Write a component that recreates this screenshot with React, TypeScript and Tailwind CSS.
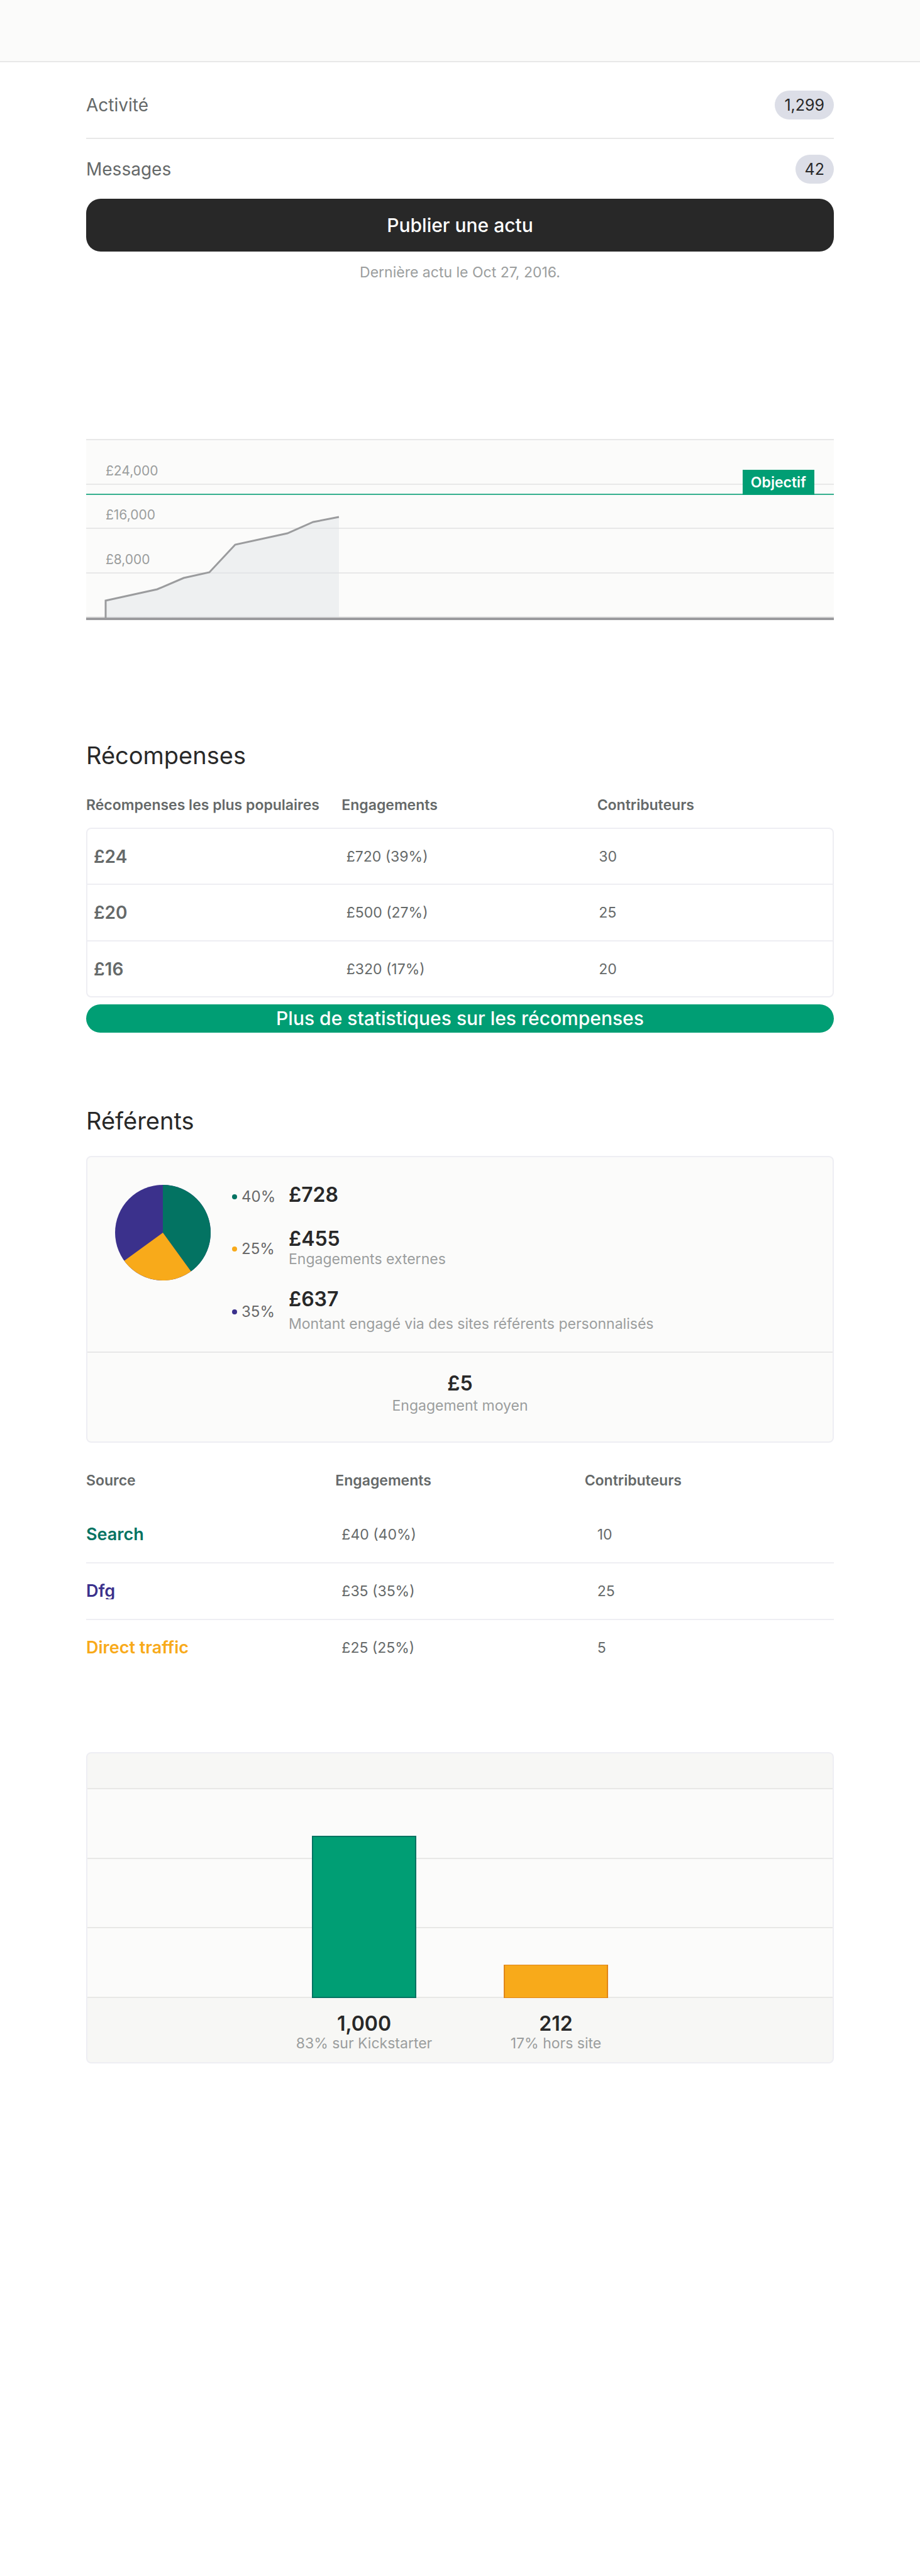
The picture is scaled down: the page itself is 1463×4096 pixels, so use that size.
import React from 'react';

const stats = [
  { label: 'Activité', value: '1,299', row: 'pt-[45px] pb-[29px] border-b-2 border-[#e8e8e8]' },
  { label: 'Messages', value: '42', row: 'pt-[25px] pb-[24px]' },
];

const axisLabels = ['£24,000', '£16,000', '£8,000', ''];

const rewards = [
  { amount: '£24', pledged: '£720 (39%)', backers: '30' },
  { amount: '£20', pledged: '£500 (27%)', backers: '25' },
  { amount: '£16', pledged: '£320 (17%)', backers: '20' },
];

const shares = [
  { percent: '40%', amount: '£728', caption: '', dot: 'bg-[#037362]', captionGap: '' },
  { percent: '25%', amount: '£455', caption: 'Engagements externes', dot: 'bg-[#f8aa1a]', captionGap: '' },
  {
    percent: '35%',
    amount: '£637',
    caption: 'Montant engagé via des sites référents personnalisés',
    dot: 'bg-[#3b318c]',
    captionGap: 'mt-[7px]',
  },
];

const sources = [
  { name: 'Search', style: 'text-[#037362]', pledged: '£40 (40%)', backers: '10' },
  { name: 'Dfg', style: 'overflow-hidden text-[#3b318c]', pledged: '£35 (35%)', backers: '25' },
  { name: 'Direct traffic', style: 'text-[#f8aa1a]', pledged: '£25 (25%)', backers: '5' },
];

const bars = [
  {
    count: '1,000',
    caption: '83% sur Kickstarter',
    bar: 'h-[258px] bg-[#009e74] border-2 border-[#037362]',
  },
  {
    count: '212',
    caption: '17% hors site',
    bar: 'h-[53px] bg-[#f8aa1a] border-x-2 border-y border-[#e0861a]',
  },
];

function Stats() {
  return (
    <section>
      {stats.map((s) => (
        <div key={s.label} className={`flex items-center justify-between ${s.row}`}>
          <span className="text-[28px] leading-[46px] text-[#656969]">{s.label}</span>
          <span className="rounded-full bg-[#dcdee7] px-[15px] text-[25px] leading-[46px] text-[#282828]">
            {s.value}
          </span>
        </div>
      ))}
      <button
        type="button"
        className="flex h-[84px] w-full items-center justify-center rounded-[23px] bg-[#282828] text-[30px] font-medium text-white"
      >
        Publier une actu
      </button>
      <p className="mt-[18px] text-center text-[23px] leading-[30px] text-[#9b9e9e]">
        Dernière actu le Oct 27, 2016.
      </p>
    </section>
  );
}

function FundingChart() {
  return (
    <section className="relative mt-[250px] bg-[#fbfbfa]">
      <div className="grid h-[282px] grid-rows-4">
        {axisLabels.map((label) => (
          <div
            key={label}
            className="flex items-end border-t-2 border-[#e8e8e8] pb-[8px] pl-[31px] text-[21px] leading-[24px] text-[#9b9e9e]"
          >
            {label}
          </div>
        ))}
      </div>
      <div className="h-[2px] bg-[#e8e8e8]" />
      <div className="h-[4px] bg-[#9b9b9e]" />
      <svg className="absolute inset-0 h-[284px] w-full" aria-hidden="true">
        <path
          d="M31 284V257L113 239L155 221L196 212L237 168L320 150L361 132L402 124V283Z"
          fill="#dcdfe5"
          fillOpacity="0.42"
        />
        <path
          d="M31 284V257L113 239L155 221L196 212L237 168L320 150L361 132L402 124"
          fill="none"
          stroke="#9b9c9e"
          strokeWidth="3"
        />
      </svg>
      <div className="absolute inset-x-0 top-[49px] flex flex-col items-end border-b-2 border-[#35b08e]">
        <span className="-mb-[2px] mr-[31px] bg-[#009e74] px-[13px] text-[23px] font-semibold leading-[40px] text-white">
          Objectif
        </span>
      </div>
    </section>
  );
}

function Rewards() {
  return (
    <section className="mt-[192px]">
      <h2 className="text-[38px] leading-[46px] text-[#282828]">Récompenses</h2>
      <table className="mt-[41px] block">
        <thead className="block">
          <tr className="grid grid-cols-3 gap-[30px] text-left text-[23px] leading-[30px] text-[#656969]">
            <th className="whitespace-nowrap font-semibold">Récompenses les plus populaires</th>
            <th className="font-semibold">Engagements</th>
            <th className="font-semibold">Contributeurs</th>
          </tr>
        </thead>
        <tbody className="mt-[21px] block divide-y-2 divide-[#eeeef3] rounded-[8px] border-2 border-[#eeeef3]">
          {rewards.map((r) => (
            <tr
              key={r.amount}
              className="grid grid-cols-3 items-center gap-[30px] pt-[29px] pb-[29px] pl-[10px] text-[23px] leading-[30px] text-[#656969] first:pb-[28px] last:pb-[28px]"
            >
              <td className="text-[28px] font-semibold">{r.amount}</td>
              <td>{r.pledged}</td>
              <td>{r.backers}</td>
            </tr>
          ))}
        </tbody>
      </table>
      <button
        type="button"
        className="mt-[11px] flex h-[45px] w-full items-center justify-center rounded-full bg-[#009e74] text-[30px] font-medium text-white"
      >
        Plus de statistiques sur les récompenses
      </button>
    </section>
  );
}

function SharePie() {
  return (
    <svg viewBox="-80 -80 160 160" className="mt-[3px] size-[152px] shrink-0" aria-hidden="true">
      <circle r="80" fill="#3b318c" />
      <path d="M0 0V-80A80 80 0 0 1 47.02 64.72Z" fill="#037362" />
      <path d="M0 0L47.02 64.72A80 80 0 0 1 -64.72 47.02Z" fill="#f8aa1a" />
    </svg>
  );
}

function Referrers() {
  return (
    <section className="mt-[117px]">
      <h2 className="text-[38px] leading-[46px] text-[#282828]">Référents</h2>
      <div className="mt-[33px] rounded-[8px] border-2 border-[#eeeef3] bg-[#fbfbfa]">
        <div className="flex gap-[34px] border-b-2 border-[#e8e8e8] pt-[41px] pb-[31px] pl-[44px]">
          <SharePie />
          <ul className="flex flex-col gap-[32px]">
            {shares.map((s) => (
              <li key={s.percent} className="flex items-center">
                <span className="flex w-[90px] items-center gap-[7px] pt-[6px] text-[24px] leading-[30px] text-[#696969]">
                  <span className={`size-[8px] rounded-full ${s.dot}`} />
                  {s.percent}
                </span>
                <span className="flex flex-col">
                  <strong className="text-[32px] font-semibold leading-[38px] text-[#282828]">{s.amount}</strong>
                  {s.caption && (
                    <span className={`text-[23px] leading-[26px] text-[#9b9e9e] ${s.captionGap}`}>{s.caption}</span>
                  )}
                </span>
              </li>
            ))}
          </ul>
        </div>
        <div className="flex flex-col items-center gap-[3px] pt-[30px] pb-[44px]">
          <strong className="text-[32px] font-semibold leading-[38px] text-[#282828]">£5</strong>
          <span className="text-[23px] leading-[26px] text-[#9b9e9e]">Engagement moyen</span>
        </div>
      </div>

      <table className="mt-[45px] block">
        <thead className="block">
          <tr className="grid grid-cols-3 text-left text-[23px] leading-[30px] text-[#656969]">
            <th className="font-semibold">Source</th>
            <th className="font-semibold">Engagements</th>
            <th className="font-semibold">Contributeurs</th>
          </tr>
        </thead>
        <tbody className="mt-[27px] block">
          {sources.map((s) => (
            <tr
              key={s.name}
              className="grid grid-cols-3 items-center gap-[30px] border-b-2 border-[#eeeef3] py-[29px] text-[23px] leading-[30px] text-[#656969] last:border-transparent"
            >
              <td className={`text-[27px] font-semibold leading-[26px] ${s.style}`}>{s.name}</td>
              <td>{s.pledged}</td>
              <td>{s.backers}</td>
            </tr>
          ))}
        </tbody>
      </table>
    </section>
  );
}

function ViewsChart() {
  return (
    <section className="mt-[120px] overflow-hidden rounded-[8px] border-2 border-[#eeeef3] bg-[#f7f7f5]">
      <div className="h-[55px]" />
      <div className="grid h-[334px] border-t-2 border-[#e8e8e6] bg-[#fbfbfa]">
        <div className="col-start-1 row-start-1 grid grid-rows-3">
          <div className="border-b-2 border-[#e8e8e6]" />
          <div className="border-b-2 border-[#e8e8e6]" />
          <div className="border-b-2 border-[#e8e8e6]" />
        </div>
        <div className="col-start-1 row-start-1 flex items-end justify-center">
          {bars.map((b) => (
            <div key={b.count} className="flex w-[305px] justify-center">
              <div className={`w-[166px] ${b.bar}`} />
            </div>
          ))}
        </div>
      </div>
      <div className="flex justify-center pt-[22px] pb-[18px]">
        {bars.map((b) => (
          <div key={b.count} className="flex w-[305px] flex-col items-center">
            <strong className="text-[32px] font-semibold leading-[38px] text-[#282828]">{b.count}</strong>
            <span className="text-[23px] leading-[24px] text-[#9b9e9e]">{b.caption}</span>
          </div>
        ))}
      </div>
    </section>
  );
}

export default function App() {
  return (
    <div className="min-h-screen bg-white font-['Inter',sans-serif]">
      <header className="h-[99px] border-b-2 border-[#e8e8e8] bg-[#fbfbfa]" />
      <main className="px-[137px]">
        <Stats />
        <FundingChart />
        <Rewards />
        <Referrers />
        <ViewsChart />
      </main>
    </div>
  );
}
